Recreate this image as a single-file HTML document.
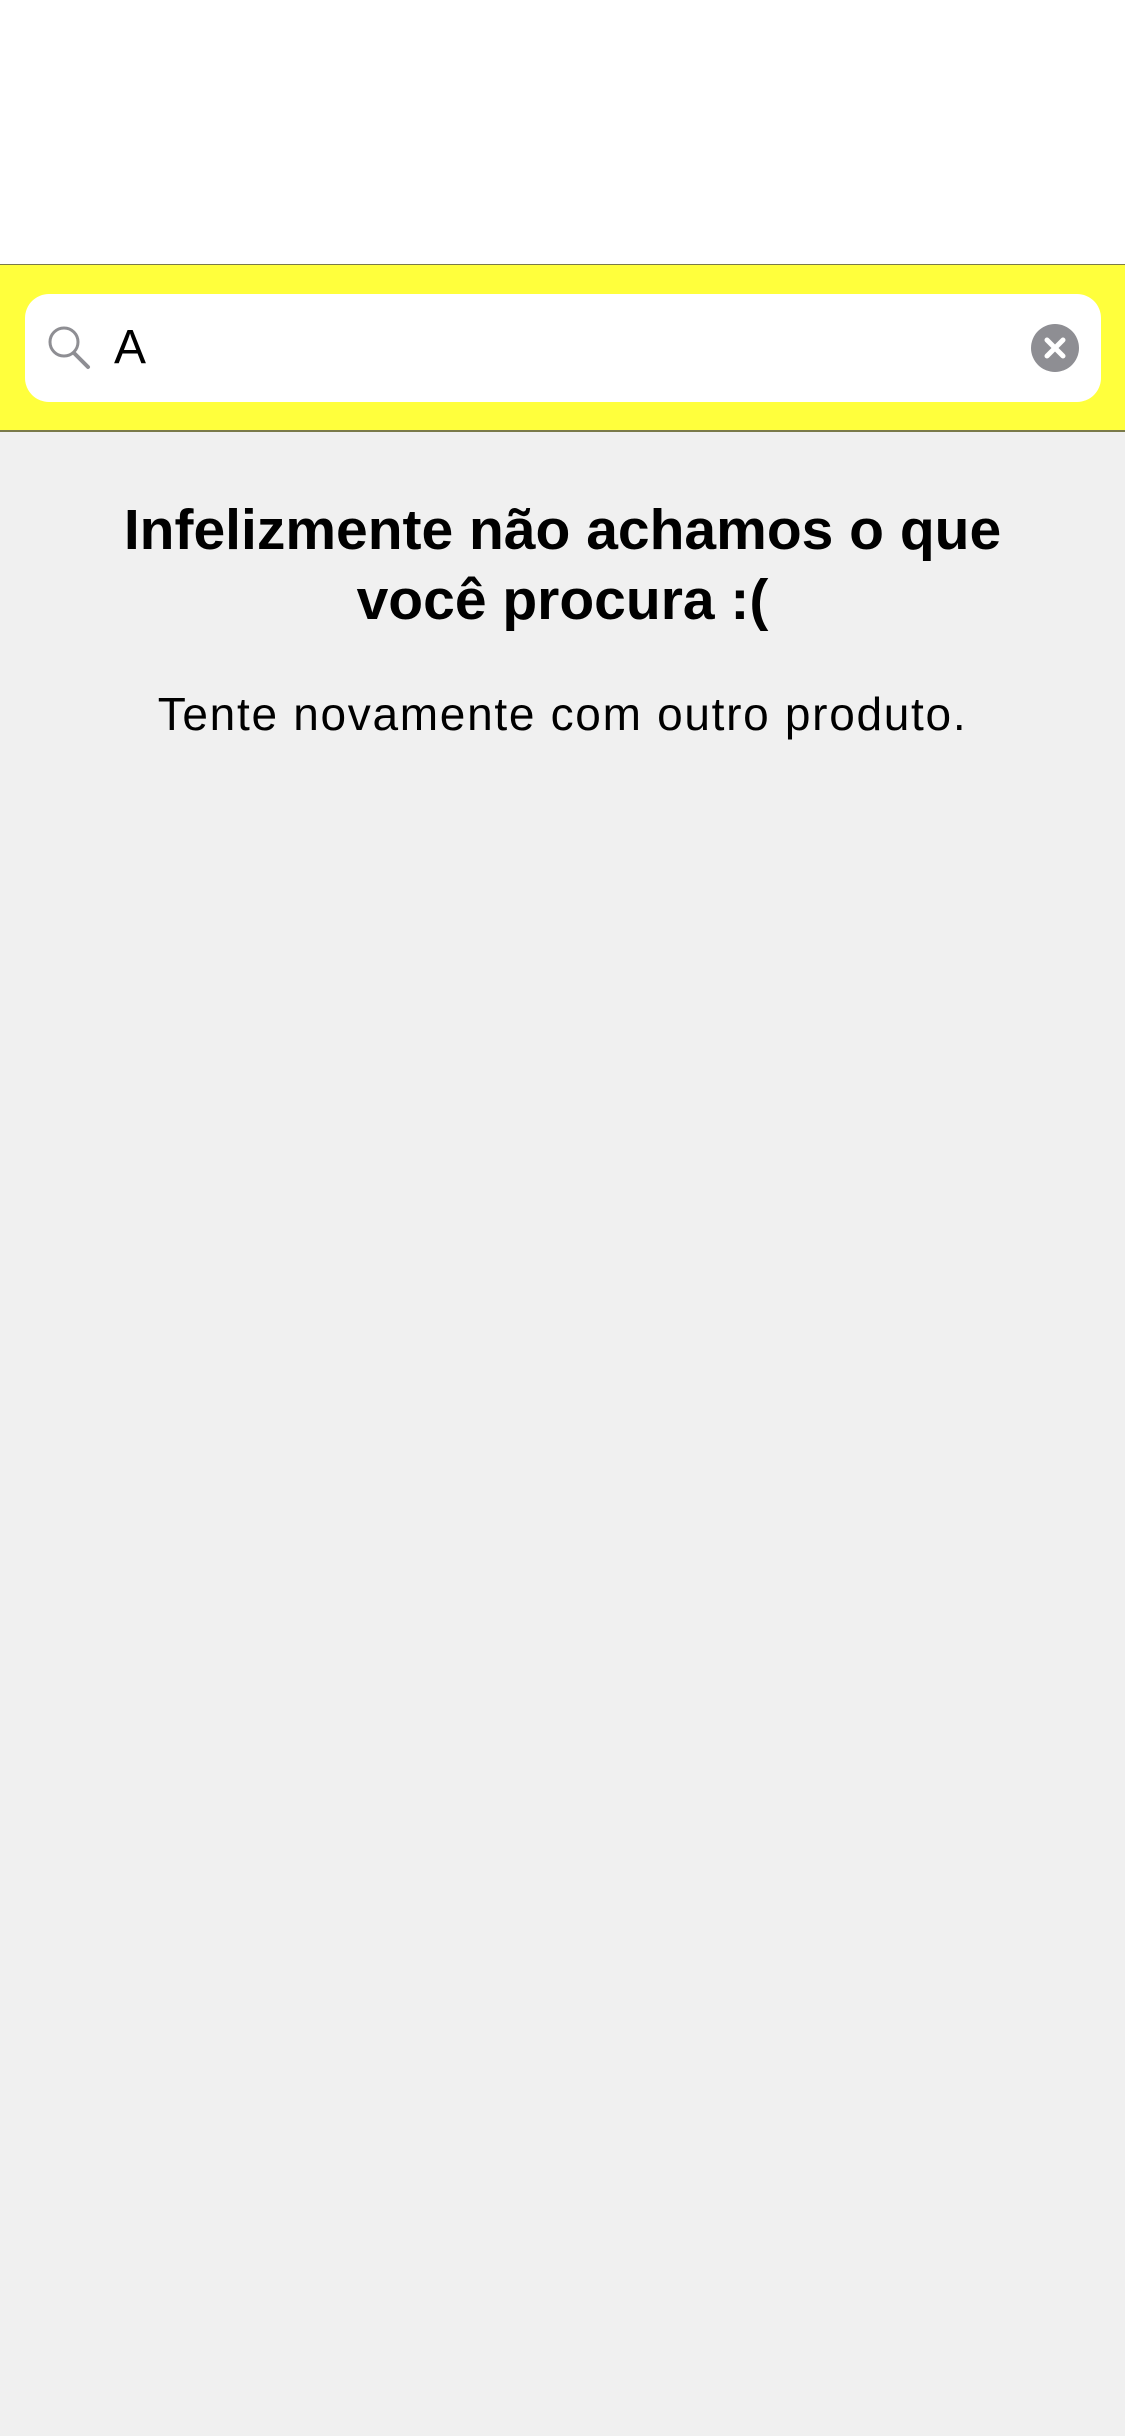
<!DOCTYPE html>
<html><head><meta charset="utf-8"><style>
html,body{margin:0;padding:0}
body{width:1125px;height:2436px;background:#f0f0f0;font-family:"Liberation Sans",sans-serif;position:relative;overflow:hidden}
.top{position:absolute;left:0;top:0;width:1125px;height:264px;background:#fff;border-bottom:1px solid #7a7a4a}
.bar{position:absolute;left:0;top:265px;width:1125px;height:165px;background:#ffff3c;border-bottom:2px solid #7a7a4a}
.field{position:absolute;left:25px;top:294px;width:1076px;height:108px;background:#fff;border-radius:24px}
.a{position:absolute;left:114px;top:320px;font-size:48px;color:#000;line-height:56px}
h1{position:absolute;left:0;top:495px;width:1125px;margin:0;text-align:center;font-size:57px;font-weight:bold;line-height:70px;color:#000}
p{position:absolute;left:0;top:686px;width:1125px;margin:0;text-align:center;font-size:46px;letter-spacing:1.7px;line-height:56px;color:#000}
</style></head><body>
<div class="top"></div>
<div class="bar"></div>
<div class="field"></div>
<svg style="position:absolute;left:44px;top:324px" width="50" height="46" viewBox="0 0 50 46">
<circle cx="20" cy="18" r="14" fill="none" stroke="#8e8e93" stroke-width="3"/>
<line x1="30" y1="29" x2="44" y2="43" stroke="#8e8e93" stroke-width="4" stroke-linecap="round"/>
</svg>
<div class="a">A</div>
<svg style="position:absolute;left:1031px;top:324px" width="48" height="48" viewBox="0 0 48 48">
<circle cx="24" cy="24" r="24" fill="#8e8e93"/>
<path d="M16 16L32 32M32 16L16 32" stroke="#fff" stroke-width="5" stroke-linecap="round"/>
</svg>
<h1>Infelizmente não achamos o que<br>você procura :(</h1>
<p>Tente novamente com outro produto.</p>
</body></html>
